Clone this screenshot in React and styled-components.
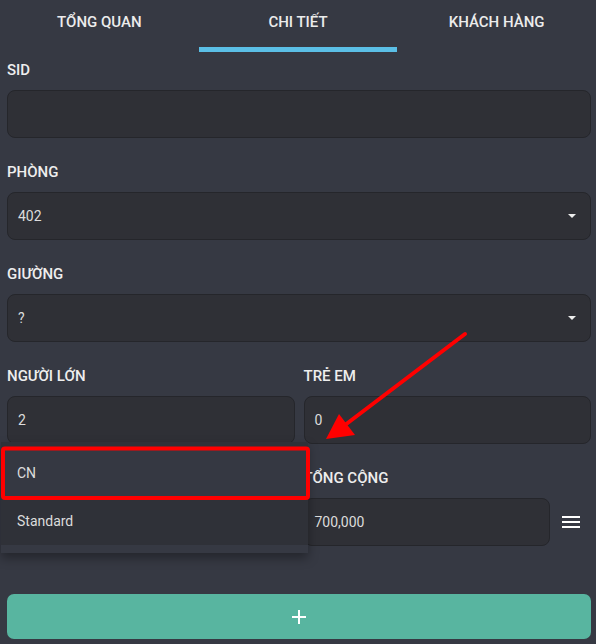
import React from "react";
import styled, { createGlobalStyle } from "styled-components";

const Global = createGlobalStyle`
  html, body { margin: 0; padding: 0; background: #363943; }
  body { font-family: Roboto, "Liberation Sans", sans-serif; }
  * { box-sizing: border-box; }
`;

const Page = styled.div`
  position: relative;
  width: 596px;
  height: 644px;
  background: #363943;
  overflow: hidden;
`;

const Tabs = styled.div`
  display: grid;
  grid-template-columns: 1fr 1fr 1fr;
  height: 52px;
`;

const Tab = styled.div`
  display: flex;
  align-items: center;
  justify-content: center;
  height: 52px;
  padding-bottom: 3px;
  font-size: 15px;
  font-weight: 500;
  color: #ececec;
  border-bottom: 5px solid ${(p) => (p.$active ? "#5bbfe6" : "transparent")};
`;

const Content = styled.div`
  padding: 8px 5px 0 7px;
  display: flex;
  flex-direction: column;
`;

const Field = styled.div`
  position: relative;
  display: flex;
  flex-direction: column;
  margin-bottom: ${(p) => (p.$last ? "0" : "24px")};
  min-width: 0;
`;

const Label = styled.div`
  height: 20px;
  line-height: 20px;
  margin-bottom: 10px;
  font-size: 15px;
  font-weight: 500;
  color: #eeeeee;
  white-space: nowrap;
`;

const Box = styled.div`
  height: 48px;
  flex: ${(p) => (p.$grow ? "1 1 auto" : "0 0 48px")};
  display: flex;
  align-items: center;
  justify-content: space-between;
  padding: 0 14px 0 10px;
  background: #2f3036;
  border: 1px solid #25262b;
  border-radius: 8px;
  font-size: 14px;
  color: #dcdcdc;
`;

const Caret = styled.span`
  width: 0;
  height: 0;
  border-left: 4px solid transparent;
  border-right: 4px solid transparent;
  border-top: 4px solid #eeeeee;
`;

const Row = styled.div`
  display: grid;
  grid-template-columns: 1fr 1fr;
  column-gap: 9px;
`;

const InputLine = styled.div`
  display: flex;
  align-items: center;
  height: 48px;
`;

const MenuButton = styled.div`
  width: 41px;
  height: 48px;
  flex: 0 0 41px;
  display: flex;
  align-items: center;
  justify-content: center;
`;

const AddButton = styled.button`
  margin-top: 48px;
  height: 45px;
  width: 100%;
  border: none;
  border-radius: 7px;
  background: #58b5a0;
  display: flex;
  align-items: center;
  justify-content: center;
  padding: 0;
`;

const Menu = styled.div`
  position: absolute;
  left: -6px;
  top: -26px;
  width: 307px;
  background: #2f3138;
  padding-top: 7px;
  box-shadow: 0 5px 10px rgba(0, 0, 0, 0.35);
  z-index: 5;
`;

const MenuItem = styled.div`
  height: 48px;
  display: flex;
  align-items: center;
  padding-left: 16px;
  font-size: 14px;
  color: #dcdcdc;
  background: ${(p) => (p.$active ? "#353842" : "transparent")};
`;

const MenuFooter = styled.div`
  height: 8px;
  background: #363943;
`;

const Annotation = styled.svg`
  position: absolute;
  left: 0;
  top: 0;
  pointer-events: none;
  z-index: 10;
`;

const Hamburger = () => (
  <svg width="18" height="12" viewBox="0 0 18 12">
    <rect x="0" y="0" width="18" height="2" fill="#ffffff" />
    <rect x="0" y="5" width="18" height="2" fill="#ffffff" />
    <rect x="0" y="10" width="18" height="2" fill="#ffffff" />
  </svg>
);

const Plus = () => (
  <svg width="14" height="14" viewBox="0 0 14 14">
    <rect x="6" y="0" width="2" height="14" fill="#ffffff" />
    <rect x="0" y="6" width="14" height="2" fill="#ffffff" />
  </svg>
);

export default function App() {
  return (
    <Page>
      <Global />
      <Tabs>
        <Tab>TỔNG QUAN</Tab>
        <Tab $active>CHI TIẾT</Tab>
        <Tab>KHÁCH HÀNG</Tab>
      </Tabs>
      <Content>
        <Field>
          <Label>SID</Label>
          <Box />
        </Field>
        <Field>
          <Label>PHÒNG</Label>
          <Box>
            <span>402</span>
            <Caret />
          </Box>
        </Field>
        <Field>
          <Label>GIƯỜNG</Label>
          <Box>
            <span>?</span>
            <Caret />
          </Box>
        </Field>
        <Row>
          <Field>
            <Label>NGƯỜI LỚN</Label>
            <Box>2</Box>
          </Field>
          <Field>
            <Label>TRẺ EM</Label>
            <Box>0</Box>
          </Field>
        </Row>
        <Row>
          <Field $last>
            <Label />
            <Box>
              <span />
              <Caret />
            </Box>
            <Menu>
              <MenuItem $active>CN</MenuItem>
              <MenuItem>Standard</MenuItem>
              <MenuFooter />
            </Menu>
          </Field>
          <Field $last>
            <Label>TỔNG CỘNG</Label>
            <InputLine>
              <Box $grow>700,000</Box>
              <MenuButton>
                <Hamburger />
              </MenuButton>
            </InputLine>
          </Field>
        </Row>
        <AddButton>
          <Plus />
        </AddButton>
      </Content>
      <Annotation width="596" height="644" viewBox="0 0 596 644">
        <rect x="3" y="448.5" width="305" height="49.5" rx="2" fill="none" stroke="#ff0000" strokeWidth="4" />
        <line x1="465" y1="334" x2="345" y2="425" stroke="#ff0000" strokeWidth="4" strokeLinecap="round" />
        <polygon points="326,439 339,414 355,435" fill="#ff0000" />
      </Annotation>
    </Page>
  );
}
